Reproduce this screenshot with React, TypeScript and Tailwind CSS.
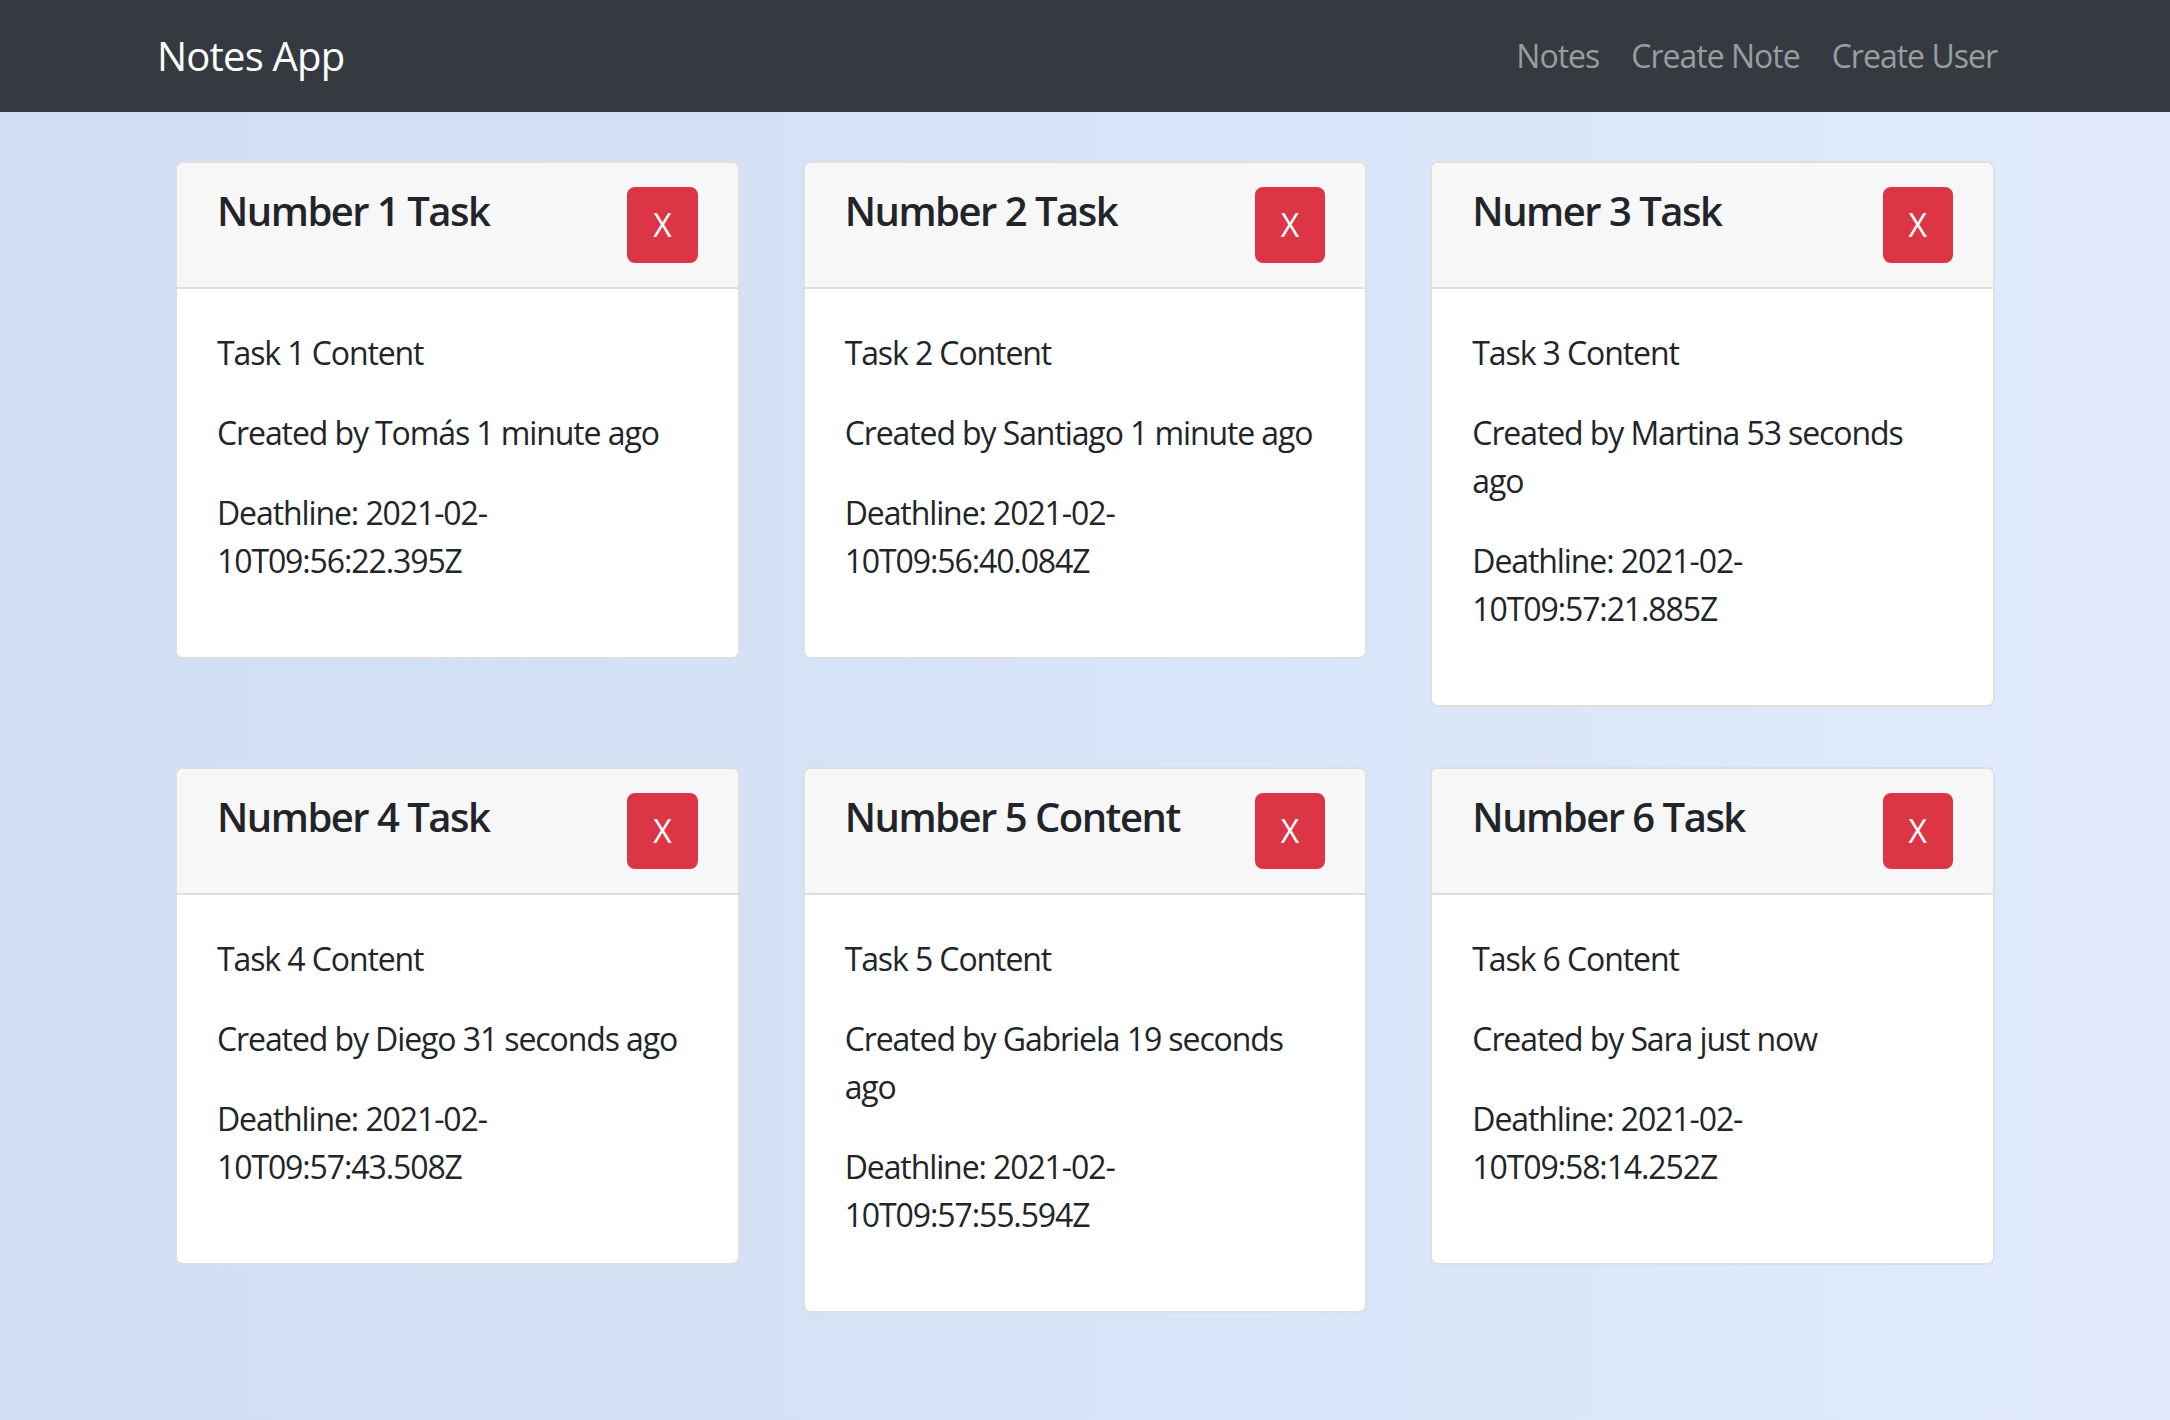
import React from 'react';

type Note = {
  title: string;
  content: string;
  author: string;
  ago: string;
  deadline: string;
};

const notes: Note[] = [
  { title: 'Number 1 Task', content: 'Task 1 Content', author: 'Tomás', ago: '1 minute ago', deadline: '2021-02-10T09:56:22.395Z' },
  { title: 'Number 2 Task', content: 'Task 2 Content', author: 'Santiago', ago: '1 minute ago', deadline: '2021-02-10T09:56:40.084Z' },
  { title: 'Numer 3 Task', content: 'Task 3 Content', author: 'Martina', ago: '53 seconds ago', deadline: '2021-02-10T09:57:21.885Z' },
  { title: 'Number 4 Task', content: 'Task 4 Content', author: 'Diego', ago: '31 seconds ago', deadline: '2021-02-10T09:57:43.508Z' },
  { title: 'Number 5 Content', content: 'Task 5 Content', author: 'Gabriela', ago: '19 seconds ago', deadline: '2021-02-10T09:57:55.594Z' },
  { title: 'Number 6 Task', content: 'Task 6 Content', author: 'Sara', ago: 'just now', deadline: '2021-02-10T09:58:14.252Z' },
];

function NoteCard({ note }: { note: Note }) {
  return (
    <div className="bg-white border-2 border-[#dfdfdf] rounded-[8px] overflow-hidden">
      <div className="bg-[#f7f7f7] border-b-2 border-[#dfdfdf] px-10 py-6 flex items-start justify-between">
        <h5 className="text-[40px] leading-[48px] font-semibold tracking-[-1.5px] text-[#212529]">{note.title}</h5>
        <button className="bg-[#dc3545] border-2 border-[#dc3545] text-white text-[32px] leading-[48px] px-6 py-3 rounded-[8px]">
          X
        </button>
      </div>
      <div className="p-10 text-[32px] leading-[48px] tracking-[-1.1px] text-[#212529]">
        <p className="mb-8">{note.content}</p>
        <p className="mb-8">
          Created by {note.author} {note.ago}
        </p>
        <p className="mb-8">Deathline: {note.deadline}</p>
      </div>
    </div>
  );
}

export default function App() {
  return (
    <div
      className="min-h-screen bg-gradient-to-r from-[#cfdef3] to-[#e0eafc]"
      style={{ fontFamily: '"Open Sans", "Noto Sans", sans-serif' }}
    >
      {/* Navbar */}
      <nav className="bg-[#343a40] py-4">
        <div className="w-[1856px] mx-auto flex items-center justify-between">
          <a className="text-white text-[40px] leading-[60px] py-[10px] tracking-[-0.8px]">Notes App</a>
          <div className="flex items-center text-[32px] leading-[48px] tracking-[-1px] text-[#9a9da0]">
            <a className="px-4 py-4">Notes</a>
            <a className="px-4 py-4">Create Note</a>
            <a className="px-4 py-4">Create User</a>
          </div>
        </div>
      </nav>

      {/* Notes grid */}
      <div className="w-[1820px] mx-auto mt-[49px] pb-10 grid grid-cols-3 gap-x-[63px] gap-y-[60px] items-start">
        {notes.map((note) => (
          <NoteCard key={note.title} note={note} />
        ))}
      </div>
    </div>
  );
}
